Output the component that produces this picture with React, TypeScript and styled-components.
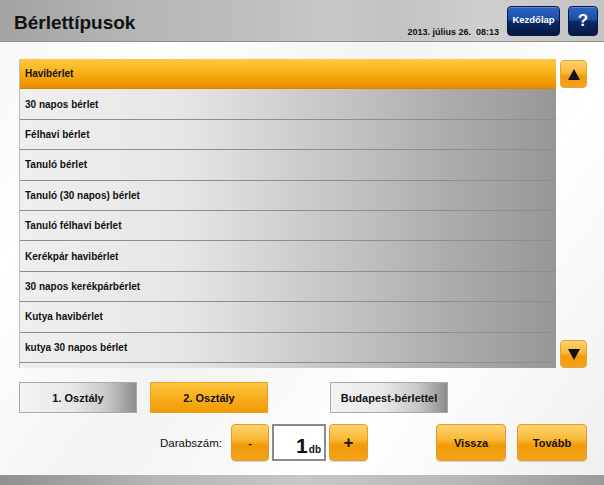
import styled, { createGlobalStyle } from "styled-components";

const GlobalStyle = createGlobalStyle`
  html, body {
    margin: 0;
    padding: 0;
    background: #ffffff;
  }
  * {
    box-sizing: border-box;
  }
`;

// the last entry is only partly scrolled into view, so it stays blank
const passes = [
  "Havibérlet",
  "30 napos bérlet",
  "Félhavi bérlet",
  "Tanuló bérlet",
  "Tanuló (30 napos) bérlet",
  "Tanuló félhavi bérlet",
  "Kerékpár havibérlet",
  "30 napos kerékpárbérlet",
  "Kutya havibérlet",
  "kutya 30 napos bérlet",
  "",
];

const App: React.FC = () => {
  return (
    <Screen>
      <GlobalStyle />
      <Header>
        <Title>Bérlettípusok</Title>
        <HeaderRight>
          <DateText>2013. július 26.&nbsp;&nbsp;08:13</DateText>
          <BlueButton>Kezdőlap</BlueButton>
          <BlueButton $square>?</BlueButton>
        </HeaderRight>
      </Header>

      <Main>
        <ListArea>
          <List>
            {passes.map((name, i) => (
              <Row key={i} $active={i === 0}>
                {name}
              </Row>
            ))}
          </List>
          <ScrollColumn>
            <ArrowButton aria-label="fel">
              <svg width="12" height="11" viewBox="0 0 12 11">
                <path d="M6 0 L12 11 L0 11 Z" fill="#111" />
              </svg>
            </ArrowButton>
            <ArrowButton aria-label="le">
              <svg width="12" height="11" viewBox="0 0 12 11">
                <path d="M0 0 L12 0 L6 11 Z" fill="#111" />
              </svg>
            </ArrowButton>
          </ScrollColumn>
        </ListArea>

        <ClassRow>
          <ClassButton>1. Osztály</ClassButton>
          <ClassButton $active>2. Osztály</ClassButton>
          <ClassButton $wide>Budapest-bérlettel</ClassButton>
        </ClassRow>

        <ActionRow>
          <QtyLabel>Darabszám:</QtyLabel>
          <OrangeButton $w={38}>-</OrangeButton>
          <QtyBox>
            <QtyNum>1</QtyNum>
            <QtyUnit>db</QtyUnit>
          </QtyBox>
          <OrangeButton $w={39} $big>+</OrangeButton>
          <Spacer />
          <OrangeButton $w={70}>Vissza</OrangeButton>
          <OrangeButton $w={70}>Tovább</OrangeButton>
        </ActionRow>
      </Main>

      <BottomBar />
    </Screen>
  );
};

const Screen = styled.div`
  width: 604px;
  height: 485px;
  display: flex;
  flex-direction: column;
  overflow: hidden;
  font-family: "Liberation Sans", Arial, sans-serif;
  color: #111;
  background: linear-gradient(125deg, #f6f6f6 0%, #ffffff 20%, #f3f3f3 45%, #ffffff 70%, #efefef 100%);
`;

const Header = styled.header`
  height: 42px;
  flex: none;
  display: flex;
  align-items: flex-start;
  justify-content: space-between;
  padding: 0 6px 0 14px;
  border-bottom: 1px solid #8f8f8f;
  background: linear-gradient(
    90deg,
    #a3a3a3 0%,
    #b4b4b4 20%,
    #bdbdbd 40%,
    #c8c8c8 55%,
    #c2c2c2 65%,
    #cfcfcf 80%,
    #c4c4c4 100%
  );
`;

const Title = styled.h1`
  margin: 12px 0 0;
  font-size: 19px;
  font-weight: bold;
  color: #111;
`;

const HeaderRight = styled.div`
  display: flex;
  align-items: flex-start;
  gap: 8px;
  padding-top: 6px;
`;

const DateText = styled.span`
  font-size: 9px;
  font-weight: bold;
  margin-top: 21px;
  color: #111;
`;

const BlueButton = styled.button<{ $square?: boolean }>`
  width: ${(p) => (p.$square ? "30px" : "53px")};
  height: 30px;
  padding: 0;
  border: 1px solid #0a1a3a;
  border-radius: 4px;
  color: #fff;
  font-family: inherit;
  font-weight: bold;
  font-size: ${(p) => (p.$square ? "17px" : "9.5px")};
  background: linear-gradient(
    180deg,
    #2a64c8 0%,
    #1d4ea6 45%,
    #0c2a66 52%,
    #061744 100%
  );
  box-shadow: inset 0 1px 0 rgba(255, 255, 255, 0.25);
  padding-bottom: ${(p) => (p.$square ? "0" : "4px")};
`;

const Main = styled.main`
  flex: 1;
  display: flex;
  flex-direction: column;
  padding: 17px 17px 0 19px;
`;

const ListArea = styled.div`
  display: flex;
  gap: 4px;
`;

const List = styled.div`
  width: 537px;
  height: 309px;
  overflow: hidden;
  border-left: 1px solid #bdbdbd;
  background: #999;
`;

const Row = styled.div<{ $active?: boolean }>`
  height: 30.4px;
  display: flex;
  align-items: center;
  padding-left: 5px;
  font-size: 10px;
  font-weight: bold;
  color: #111;
  border-bottom: 1px solid ${(p) => (p.$active ? "#d88400" : "#8d8d8d")};
  background: ${(p) =>
    p.$active
      ? "linear-gradient(180deg, #fdc93e 0%, #f8b21c 45%, #f29d05 75%, #e98a00 100%)"
      : "linear-gradient(90deg, #efefef 0%, #e6e6e6 30%, #c4c4c4 60%, #acacac 80%, #979797 100%)"};
`;

const ScrollColumn = styled.div`
  width: 27px;
  display: flex;
  flex-direction: column;
  justify-content: space-between;
  padding-top: 1px;
`;

const ArrowButton = styled.button`
  width: 27px;
  height: 28px;
  padding: 0;
  display: flex;
  align-items: center;
  justify-content: center;
  border: 1px solid #e6a23a;
  border-radius: 4px;
  background: linear-gradient(180deg, #fcd36e 0%, #f9b836 45%, #f29b0a 60%, #f4a31c 100%);
`;

const ClassRow = styled.div`
  display: flex;
  gap: 13px;
  margin-top: 14px;
  height: 31px;
`;

const ClassButton = styled.button<{ $active?: boolean; $wide?: boolean }>`
  width: 118px;
  height: 31px;
  padding: 0;
  font-family: inherit;
  font-size: 11px;
  font-weight: bold;
  color: #111;
  margin-left: ${(p) => (p.$wide ? "49px" : "0")};
  border: 1px solid ${(p) => (p.$active ? "#e9a027" : "#a9a9a9")};
  background: ${(p) =>
    p.$active
      ? "linear-gradient(180deg, #fdc543 0%, #f8b11f 45%, #f29b04 100%)"
      : "linear-gradient(90deg, #f3f3f3 0%, #e8e8e8 45%, #c8c8c8 75%, #8c8c8c 100%)"};
`;

const ActionRow = styled.div`
  display: flex;
  align-items: center;
  gap: 3px;
  margin-top: 11px;
  height: 37px;
  padding-left: 141px;
`;

const QtyLabel = styled.span`
  font-size: 11.5px;
  color: #111;
  margin-right: 6px;
`;

const OrangeButton = styled.button<{ $w: number; $big?: boolean }>`
  width: ${(p) => p.$w}px;
  height: 37px;
  padding: 0;
  font-family: inherit;
  font-weight: bold;
  font-size: ${(p) => (p.$big ? "17px" : "11px")};
  color: #111;
  border: 1px solid #e29a2a;
  border-radius: 4px;
  background: linear-gradient(180deg, #fcd36e 0%, #f9ba3a 40%, #f29b08 58%, #f4a21a 100%);
  box-shadow: 0 1px 1px rgba(0, 0, 0, 0.15);

  & + & {
    margin-left: 8px;
  }
`;

const QtyBox = styled.div`
  width: 54px;
  height: 37px;
  display: flex;
  align-items: baseline;
  justify-content: flex-end;
  padding: 8px 3px 0 0;
  border: 2px solid #8a8a8a;
  background: #fff;
`;

const QtyNum = styled.span`
  font-size: 21px;
  font-weight: bold;
`;

const QtyUnit = styled.span`
  font-size: 10px;
  font-weight: bold;
  margin-left: 1px;
`;

const Spacer = styled.div`
  flex: 1;
`;

const BottomBar = styled.footer`
  height: 10px;
  flex: none;
  background: linear-gradient(90deg, #8f8f8f 0%, #b5b5b5 25%, #c7c7c7 50%, #b9b9b9 75%, #9a9a9a 100%);
`;

export default App;
